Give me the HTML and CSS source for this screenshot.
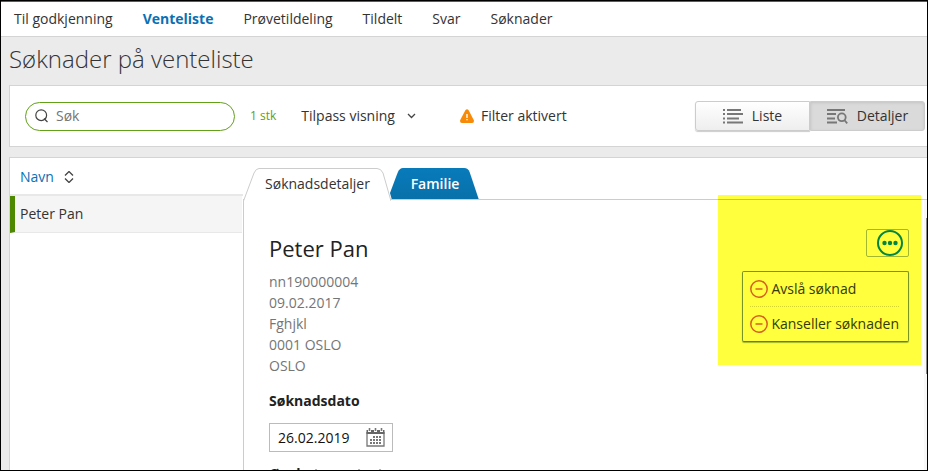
FILE: index.html
```html
<!DOCTYPE html>
<html lang="nb">
<head>
<meta charset="utf-8">
<meta name="viewport" content="width=device-width, initial-scale=1">
<title>Søknader på venteliste</title>
<link rel="stylesheet" href="styles.css">
</head>
<body>
<div class="app">
  <nav class="nav">
    <a href="#">Til godkjenning</a>
    <a href="#" class="active" aria-current="page">Venteliste</a>
    <a href="#">Prøvetildeling</a>
    <a href="#">Tildelt</a>
    <a href="#">Svar</a>
    <a href="#">Søknader</a>
  </nav>
  <main class="main">
    <h1 class="title">Søknader på venteliste</h1>
    <section class="toolbar">
      <div class="search">
        <svg width="14" height="14" viewBox="0 0 14 14" fill="none" stroke="#444" stroke-width="1.2"><circle cx="6.2" cy="6.2" r="5.4"/><path d="M9 9.500l3.500 3.500"/></svg>
        <input type="text" placeholder="Søk" aria-label="Søk">
      </div>
      <span class="count">1 stk</span>
      <button type="button" class="adjust">Tilpass visning
        <svg width="9" height="6" viewBox="0 0 9 6" fill="none" stroke="#444" stroke-width="1.3"><path d="M1 1l3.5 3.5L8 1"/></svg>
      </button>
      <span class="filter">
        <svg width="14" height="14" viewBox="0 0 14 14"><path d="M5.500.9Q7-.6 8.500.9L13.900 11.200Q14.300 14 12.200 14H1.800Q-.3 14 .1 11.200Z" fill="#f78b09"/><path d="M7 5v4M7 10v1.200" stroke="#fff" stroke-width="1.400"/></svg>
        Filter aktivert
      </span>
      <div class="views">
        <button type="button" class="view">
          <svg width="20" height="15" viewBox="0 0 20 15" stroke="#777" stroke-width="1.800"><path d="M0 1h2M0 5h2M0 9.500h2M0 13.500h2M4 1h14M4 5h16M4 9.500h12M4 13.500h16"/></svg>
          Liste
        </button>
        <button type="button" class="view selected" aria-pressed="true">
          <svg width="21" height="15" viewBox="0 0 21 15" fill="none" stroke="#777" stroke-width="1.800"><path d="M0 1h18M0 5h9M0 9.500h8M0 13.500h10"/><circle cx="14.800" cy="8.300" r="3.900"/><path d="M17.300 11l2.900 3.300"/></svg>
          Detaljer
        </button>
      </div>
    </section>
    <section class="workspace">
      <div class="list">
        <button type="button" class="sort">Navn
          <svg width="10" height="12" viewBox="0 0 10 12" fill="none" stroke="#444" stroke-width="1.300"><path d="M1 4.500l4-4 4 4M1 7.500l4 4 4-4"/></svg>
        </button>
        <a href="#" class="row">Peter Pan</a>
      </div>
      <div class="details">
        <div class="tabs">
          <button type="button" class="tab">
            <svg class="shape" width="148" height="33" viewBox="0 0 148 33"><path d="M.5 33L11 5Q13 .5 16 .5H134Q138 .5 140 5L148 33" fill="#fff" stroke="#ccc"/></svg>
            <span>Søknadsdetaljer</span>
          </button>
          <button type="button" class="tab family">
            <svg class="shape" width="89" height="32" viewBox="0 0 90 32" preserveAspectRatio="none"><defs><linearGradient id="blue" x2="0" y2="1"><stop stop-color="#087bbb"/><stop offset="1" stop-color="#0870a9"/></linearGradient></defs><path d="M0 25L8 4Q10 0 13 0H75Q79 0 80.500 4L90 32H2Z" fill="url(#blue)"/></svg>
            <span>Familie</span>
          </button>
        </div>
        <div class="panel">
          <div class="person">
            <h2>Peter Pan</h2>
            <p>nn190000004</p>
            <p>09.02.2017</p>
            <p>Fghjkl</p>
            <p>0001 OSLO</p>
            <p>OSLO</p>
            <label class="label" for="date">Søknadsdato</label>
            <div class="date">
              <input id="date" type="text" value="26.02.2019">
              <button type="button" aria-label="Velg dato">
                <svg width="19" height="19" viewBox="0 0 19 19"><path d="M1 4v14h17V4" fill="none" stroke="#777" stroke-width="1.300"/><path d="M.5 2H2v2h3V2h3v2h3V2h3v2h3V2h1.500v4H.5Z" fill="#666"/><path d="M3.500 0v3M9.500 0v3M15.500 0v3" stroke="#777" stroke-width="1.600"/><path d="M7 9h9M4 12h12M4 15h12" stroke="#777" stroke-width="2" stroke-dasharray="2 1"/></svg>
              </button>
            </div>
            <label class="label next" for="start">Ønsket oppstart</label>
            <input id="start" class="start" type="text">
          </div>
          <div class="highlight">
            <button type="button" class="more" aria-label="Flere valg">
              <svg width="26" height="26" viewBox="0 0 26 26"><circle cx="13" cy="13" r="12" fill="none" stroke="#008542" stroke-width="2"/><g fill="#008542"><circle cx="7.500" cy="13" r="2.200"/><circle cx="13" cy="13" r="2.200"/><circle cx="18.500" cy="13" r="2.200"/></g></svg>
            </button>
            <div class="menu">
              <button type="button"><svg width="18" height="18" viewBox="0 0 18 18" fill="none" stroke="#d66020" stroke-width="1.500"><circle cx="9" cy="9" r="8.200"/><path d="M5.500 9h7"/></svg>Avslå søknad</button>
              <button type="button"><svg width="18" height="18" viewBox="0 0 18 18" fill="none" stroke="#d66020" stroke-width="1.500"><circle cx="9" cy="9" r="8.200"/><path d="M5.500 9h7"/></svg>Kanseller søknaden</button>
            </div>
          </div>
          <div class="scrollbar"></div>
        </div>
      </div>
    </section>
  </main>
</div>
</body>
</html>
```
FILE: styles.css
```css
* { box-sizing: border-box; }
body {
  margin: 0;
  font: 14px/20px "Open Sans", sans-serif;
  color: #333;
}
button, input { font: inherit; color: inherit; }
button { padding: 0; border: 0; background: none; }
svg { display: block; flex: none; }
a { color: inherit; text-decoration: none; }
.app {
  display: flex;
  flex-direction: column;
  height: 100vh;
  border: 1px solid #000;
  overflow: hidden;
  background: #ebebeb;
}
.nav {
  display: flex;
  flex: none;
  gap: 30px;
  padding: 7px 13px;
  border-top: 1px solid #1c6fa5;
  border-bottom: 1px solid #d4d4d4;
  background: #fff;
}
.active { color: #0b70b3; font-weight: 700; }
.main {
  display: flex;
  flex: 1;
  flex-direction: column;
  min-height: 0;
  padding-left: 8px;
}
.title {
  margin: 6px 0 10px;
  font-size: 24px;
  font-weight: 300;
  line-height: 32px;
}
.toolbar {
  display: flex;
  flex: none;
  align-items: center;
  height: 62px;
  padding: 0 2px 0 15px;
  border: 1px solid #d4d4d4;
  border-right: 0;
  background: #fff;
}
.search {
  display: flex;
  align-items: center;
  gap: 7px;
  width: 210px;
  height: 29px;
  padding: 0 9px;
  border: 1px solid #62a018;
  border-radius: 15px;
}
.search input {
  min-width: 0;
  width: 100%;
  padding: 0;
  border: 0;
  outline: 0;
  background: none;
}
.search input::placeholder { color: #757575; }
.count { margin-left: 15px; color: #62a018; font-size: 12px; }
.adjust { display: flex; align-items: center; gap: 12px; margin-left: 25px; }
.filter { display: flex; align-items: center; gap: 7px; margin-left: 44px; }
.views { display: flex; margin-left: auto; }
.view {
  display: flex;
  align-items: center;
  justify-content: center;
  gap: 9px;
  width: 115px;
  height: 30px;
  border: 1px solid #ccc;
  border-radius: 3px 0 0 3px;
  background: linear-gradient(#fff, #eee);
  box-shadow: 0 1px 1px #ccc;
}
.selected {
  border-radius: 0 3px 3px 0;
  background: #dadada;
  box-shadow: inset 0 1px 3px #c4c4c4;
}
.workspace {
  display: flex;
  flex: 1;
  min-height: 0;
  margin-top: 10px;
  border: 1px solid #d4d4d4;
  border-width: 1px 0 0 1px;
  background: #fff;
}
.list { flex: none; width: 233px; }
.sort {
  display: flex;
  align-items: center;
  gap: 10px;
  width: 100%;
  height: 38px;
  padding: 2px 0 0 10px;
  border-bottom: 2px solid #e8e8e8;
  color: #0b70b3;
}
.row {
  display: flex;
  align-items: center;
  height: 37px;
  margin-right: 1px;
  padding-left: 5px;
  border-left: 5px solid #4c8900;
  border-bottom: 1px solid #e8e8e8;
  background: #f5f5f5;
}
.details { display: flex; flex: 1; flex-direction: column; min-width: 0; }
.tabs {
  display: flex;
  flex: none;
  height: 41px;
  padding-top: 10px;
}
.tab {
  position: relative;
  z-index: 1;
  width: 147px;
  height: 32px;
  padding-left: 2px;
}
.tab span { position: relative; }
.family {
  z-index: 0;
  width: 89px;
  padding: 0 0 0 1px;
  color: #fff;
  font-weight: 600;
}
.shape { position: absolute; top: 0; left: 0; }
.panel {
  position: relative;
  flex: 1;
  min-height: 0;
  border: 1px solid #ccc;
  border-width: 1px 0 0 1px;
}
.person { padding: 33px 25px 0; }
.person h2 {
  margin: 0 0 8px;
  color: #222;
  font-size: 22px;
  font-weight: 400;
  line-height: 30px;
}
.person p { margin: 0; color: #757575; line-height: 21px; }
.label {
  display: block;
  margin-top: 15px;
  color: #222;
  font-weight: 700;
}
.date {
  display: flex;
  align-items: center;
  width: 124px;
  height: 29px;
  margin-top: 12px;
  padding: 0 7px 0 8px;
  border: 1px solid #bbb;
}
.date input {
  flex: 1;
  min-width: 0;
  width: 0;
  padding: 0;
  border: 0;
  color: #111;
}
.next { margin-top: 12px; }
.start { margin-top: 12px; }
.highlight {
  position: absolute;
  top: -5px;
  right: 6px;
  display: flex;
  flex-direction: column;
  align-items: flex-end;
  gap: 14px;
  width: 203px;
  height: 170px;
  padding: 34px 12px 0 0;
  background: #ffff3d;
  color: #333b0c;
}
.highlight::before {
  content: "";
  position: absolute;
  top: 4px;
  right: 0;
  left: 0;
  border-top: 1px solid #caca30;
}
.more {
  display: flex;
  align-items: center;
  justify-content: flex-end;
  width: 43px;
  height: 28px;
  padding-right: 5px;
  border: 1px solid #a3b72e;
  border-radius: 2px;
}
.menu {
  padding: 0 9px 0 7px;
  border: 1px solid #779425;
  border-bottom-color: #66801c;
  border-radius: 2px;
  box-shadow: 0 1px 1px #a3b72e;
}
.menu button {
  display: flex;
  align-items: center;
  gap: 3px;
  width: 100%;
  height: 34px;
  white-space: nowrap;
}
.menu button + button { height: 35px; border-top: 1px dotted #d4d431; }
.scrollbar {
  position: absolute;
  top: 0;
  right: 0;
  width: 3px;
  height: 100%;
  background: linear-gradient(#888, #888) 2px 18px / 1px 156px no-repeat #f8f8f8;
}
```
